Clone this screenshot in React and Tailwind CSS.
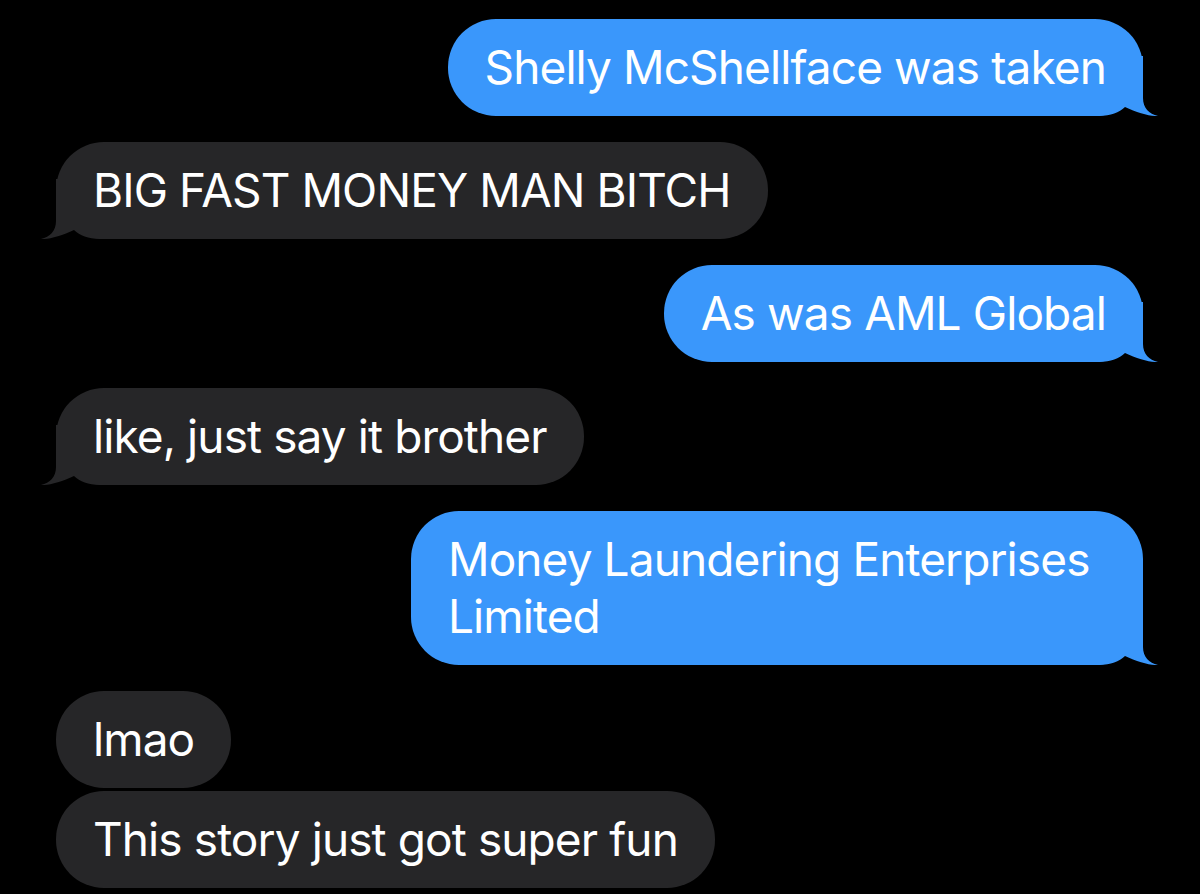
import React from "react";

function Tail({ side, color }) {
  const isRight = side === "right";
  return (
    <svg
      width="80"
      height="60"
      viewBox="-60 -60 80 60"
      className={
        isRight
          ? "absolute bottom-0 right-[-20px]"
          : "absolute bottom-0 left-[-20px] -scale-x-100"
      }
    >
      <path
        d="M 0 -60 L 0 -18 C 0 -8 6 -2 15 0 C 8 0.5 -6 -3 -18 -9 C -24 -3 -32 -0.5 -44 0 L -60 0 L -60 -60 Z"
        fill={color}
      />
    </svg>
  );
}

function Sent({ children, maxW = "" }) {
  return (
    <div className="flex justify-end pr-[57px]">
      <div className={"relative rounded-[48px] bg-[#3a97fb] px-[37px] py-[20px] text-white " + maxW}>
        <span className="relative z-10">{children}</span>
        <Tail side="right" color="#3a97fb" />
      </div>
    </div>
  );
}

function Recv({ children, tail = true }) {
  return (
    <div className="flex justify-start pl-[56px]">
      <div className="relative rounded-[48px] bg-[#262628] px-[37px] py-[20px] text-white">
        <span className="relative z-10">{children}</span>
        {tail && <Tail side="left" color="#262628" />}
      </div>
    </div>
  );
}

export default function App() {
  return (
    <div
      className="h-[894px] w-[1200px] overflow-hidden bg-black pt-[19px] text-[46px] leading-[57px] tracking-[-0.9px]"
      style={{ fontFamily: "Inter, 'Noto Sans', sans-serif" }}
    >
      <div className="flex flex-col gap-[26px]">
        <Sent>Shelly McShellface was taken</Sent>
        <Recv>BIG FAST MONEY MAN BITCH</Recv>
        <Sent>As was AML Global</Sent>
        <Recv>like, just say it brother</Recv>
        <Sent maxW="max-w-[732px]">Money Laundering Enterprises Limited</Sent>
        <div className="flex flex-col gap-[3px]">
          <Recv tail={false}>lmao</Recv>
          <Recv tail={false}>This story just got super fun</Recv>
        </div>
      </div>
    </div>
  );
}
